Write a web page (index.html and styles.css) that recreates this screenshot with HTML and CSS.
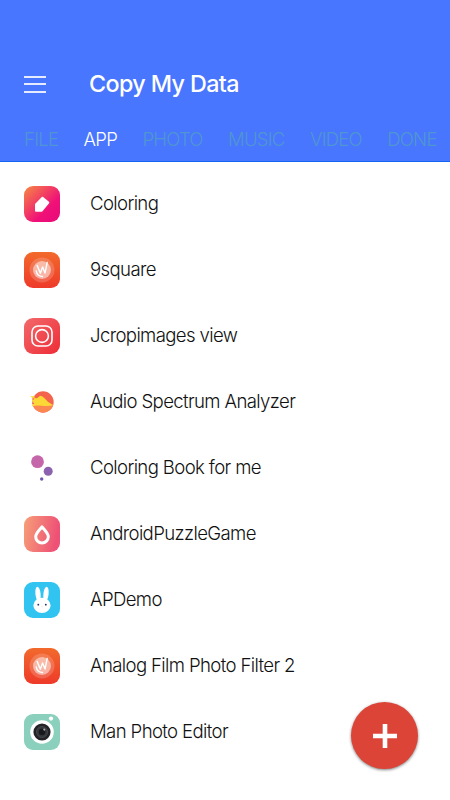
FILE: index.html
```html
<!DOCTYPE html>
<html lang="en">
<head>
<meta charset="UTF-8">
<meta name="viewport" content="width=device-width, initial-scale=1.0">
<title>Copy My Data</title>
<link rel="stylesheet" href="styles.css">
</head>
<body>
    <header class="header">
        <div class="toolbar">
            <div class="menu">
                <span></span>
                <span></span>
                <span></span>
            </div>
            <h1 class="title">Copy My Data</h1>
        </div>
        <nav class="tabs">
            <a class="tab">FILE</a>
            <a class="tab active">APP</a>
            <a class="tab">PHOTO</a>
            <a class="tab">MUSIC</a>
            <a class="tab">VIDEO</a>
            <a class="tab">DONE</a>
        </nav>
    </header>

    <ul class="list">
        <li class="row">
            <svg class="icon" viewBox="0 0 36 36">
                <defs>
                    <linearGradient id="pink" x1="0" y1="0" x2="1" y2="1">
                        <stop offset="0" stop-color="#f58a42"/>
                        <stop offset=".65" stop-color="#f01078"/>
                        <stop offset="1" stop-color="#e80a78"/>
                    </linearGradient>
                </defs>
                <rect width="36" height="36" rx="9" fill="url(#pink)"/>
                <path d="M12 18.5L18.5 11.7L24.3 16.5L17.5 24.8H12Z" fill="#fff" stroke="#fff" stroke-width="2" stroke-linejoin="round"/>
            </svg>
            <span class="name">Coloring</span>
        </li>
        <li class="row">
            <svg class="icon" viewBox="0 0 36 36">
                <defs>
                    <linearGradient id="orange" x1="0" y1="0" x2="0" y2="1">
                        <stop offset="0" stop-color="#f26a2c"/>
                        <stop offset="1" stop-color="#ee3a2a"/>
                    </linearGradient>
                </defs>
                <rect width="36" height="36" rx="9" fill="url(#orange)"/>
                <circle cx="18" cy="18" r="12.5" fill="#fff" fill-opacity=".18"/>
                <circle cx="18" cy="18" r="9" fill="#fff" fill-opacity=".5"/>
                <path d="M13.2 13.5L16.3 21.3L18.6 15L21 21L23.2 10.5M12.3 19Q13 24.2 18.5 24.5" fill="none" stroke="#fff" stroke-width="1.4" stroke-linecap="round" stroke-linejoin="round"/>
            </svg>
            <span class="name">9square</span>
        </li>
        <li class="row">
            <svg class="icon" viewBox="0 0 36 36">
                <defs>
                    <linearGradient id="red" x1="0" y1="0" x2="1" y2="1">
                        <stop offset="0" stop-color="#f26a6c"/>
                        <stop offset="1" stop-color="#ee2c36"/>
                    </linearGradient>
                </defs>
                <rect width="36" height="36" rx="9" fill="url(#red)"/>
                <rect x="8" y="8" width="20" height="20" rx="6" fill="none" stroke="#fff" stroke-width="1.6"/>
                <circle cx="18" cy="18" r="6.4" fill="none" stroke="#fff" stroke-width="1.6"/>
            </svg>
            <span class="name">Jcropimages view</span>
        </li>
        <li class="row">
            <svg class="icon" viewBox="0 0 36 36">
                <circle cx="19" cy="18" r="10.7" fill="#f4644c"/>
                <path d="M8.8 20.5H29.4A10.7 10.7 0 0 1 8.8 20.5Z" fill="#fa8850"/>
                <path d="M6.3 12.3L10.5 12V14L13 14.2L16.2 11.8Q18.5 12 20.5 14.2Q24 18.8 29.2 21.3Q24 22.6 18 21.8Q12.5 20.8 8 22.3L9.5 19L8 16.5L9 14.5Z" fill="#fcd836"/>
                <path d="M8.3 14.2h1.8v1.4H8.3zM8.3 18.8h1.6v1.3H8.3z" fill="#f4644c"/>
            </svg>
            <span class="name">Audio Spectrum Analyzer</span>
        </li>
        <li class="row">
            <svg class="icon" viewBox="0 0 36 36">
                <circle cx="13.5" cy="11.7" r="6.4" fill="#c566aa"/>
                <circle cx="24.2" cy="21.2" r="4.5" fill="#8c62b0"/>
                <circle cx="17.7" cy="29" r="1.7" fill="#7058ac"/>
            </svg>
            <span class="name">Coloring Book for me</span>
        </li>
        <li class="row">
            <svg class="icon" viewBox="0 0 36 36">
                <defs>
                    <linearGradient id="peach" x1="0" y1="0" x2="1" y2="0.2">
                        <stop offset="0" stop-color="#f6a078"/>
                        <stop offset="1" stop-color="#ee5076"/>
                    </linearGradient>
                </defs>
                <rect width="36" height="36" rx="9" fill="url(#peach)"/>
                <path d="M18 10.8C15.5 14.2 11.7 17.2 11.7 20.8A6.3 6.1 0 0 0 24.3 20.8C24.3 17.2 20.5 14.2 18 10.8Z" fill="none" stroke="#fff" stroke-width="3" stroke-linejoin="round"/>
            </svg>
            <span class="name">AndroidPuzzleGame</span>
        </li>
        <li class="row">
            <svg class="icon" viewBox="0 0 36 36">
                <rect width="36" height="36" rx="9" fill="#32c4f0"/>
                <ellipse cx="14" cy="12" rx="2.6" ry="7.4" transform="rotate(-6 14 12)" fill="#fff"/>
                <ellipse cx="22" cy="12" rx="2.6" ry="7.4" transform="rotate(6 22 12)" fill="#fff"/>
                <ellipse cx="18" cy="23.4" rx="8.6" ry="7.7" fill="#fff"/>
                <circle cx="14.3" cy="22.7" r=".9" fill="#1c2c6c"/>
                <circle cx="21.8" cy="22.7" r=".9" fill="#1c2c6c"/>
                <circle cx="18" cy="24.8" r=".5" fill="#f2c4cc"/>
            </svg>
            <span class="name">APDemo</span>
        </li>
        <li class="row">
            <svg class="icon" viewBox="0 0 36 36">
                <rect width="36" height="36" rx="9" fill="url(#orange)"/>
                <circle cx="18" cy="18" r="12.5" fill="#fff" fill-opacity=".18"/>
                <circle cx="18" cy="18" r="9" fill="#fff" fill-opacity=".5"/>
                <path d="M13.2 13.5L16.3 21.3L18.6 15L21 21L23.2 10.5M12.3 19Q13 24.2 18.5 24.5" fill="none" stroke="#fff" stroke-width="1.4" stroke-linecap="round" stroke-linejoin="round"/>
            </svg>
            <span class="name">Analog Film Photo Filter 2</span>
        </li>
        <li class="row">
            <svg class="icon" viewBox="0 0 36 36">
                <rect width="36" height="36" rx="9" fill="#8bd0bc"/>
                <circle cx="18" cy="18" r="11.8" fill="#fff"/>
                <circle cx="18" cy="18" r="8.6" fill="#222326"/>
                <circle cx="18" cy="18" r="5.5" fill="#34363a" stroke="#4a4c50" stroke-width=".8"/>
                <circle cx="18" cy="18" r="3.2" fill="#18191c"/>
                <circle cx="20.3" cy="15.6" r="1.1" fill="#a8aaac"/>
                <circle cx="27" cy="4.6" r="2.1" fill="#fff"/>
            </svg>
            <span class="name">Man Photo Editor</span>
        </li>
    </ul>

    <div class="fab">
        <svg width="24" height="24" viewBox="0 0 24 24">
            <path d="M9.7 0h4.6v9.7H24v4.6h-9.7V24H9.7v-9.7H0V9.7h9.7z" fill="#fff"/>
        </svg>
    </div>
</body>
</html>
```
FILE: styles.css
```css
body {
    margin: 0;
    height: 800px;
    overflow: hidden;
    background-color: #fff;
    font-family: Inter, "Liberation Sans", sans-serif;
}
.header {
    box-sizing: border-box;
    height: 162px;
    padding: 64px 0 0 24px;
    background-color: #4876ff;
    border-bottom: 1px solid #1264f4;
}
.toolbar {
    display: flex;
    align-items: center;
    height: 40px;
}
.menu {
    display: flex;
    flex-direction: column;
    justify-content: space-between;
    width: 22px;
    height: 17px;
    margin-right: 43px;
}
.menu span {
    height: 2px;
    background-color: #e6ecff;
}
.title {
    margin: 0;
    padding-bottom: 2px;
    color: #fff;
    font-size: 23.3px;
    font-weight: 450;
    letter-spacing: -0.6px;
}
.tabs {
    display: flex;
    gap: 25.4px;
    margin-top: 23px;
}
.tab {
    color: #4f96d0;
    font-size: 18.5px;
    font-weight: 300;
    line-height: 24px;
    letter-spacing: -0.75px;
}
.tab.active {
    color: #fff;
    font-weight: 350;
}
.list {
    margin: 0;
    padding: 9px 0 0 24px;
    list-style: none;
}
.row {
    display: flex;
    align-items: center;
    gap: 30px;
    height: 66px;
}
.icon {
    width: 36px;
    height: 36px;
}
.name {
    padding-bottom: 2px;
    color: #111;
    font-size: 18.6px;
    font-weight: 300;
    letter-spacing: -0.63px;
    white-space: nowrap;
}
/* floating add button, over the list */
.fab {
    position: absolute;
    right: 32px;
    bottom: 31px;
    display: flex;
    align-items: center;
    justify-content: center;
    width: 67px;
    height: 67px;
    border-radius: 50%;
    background-color: #dc4437;
    box-shadow: 0 1px 3px rgba(0, 0, 0, 0.5);
}
```
